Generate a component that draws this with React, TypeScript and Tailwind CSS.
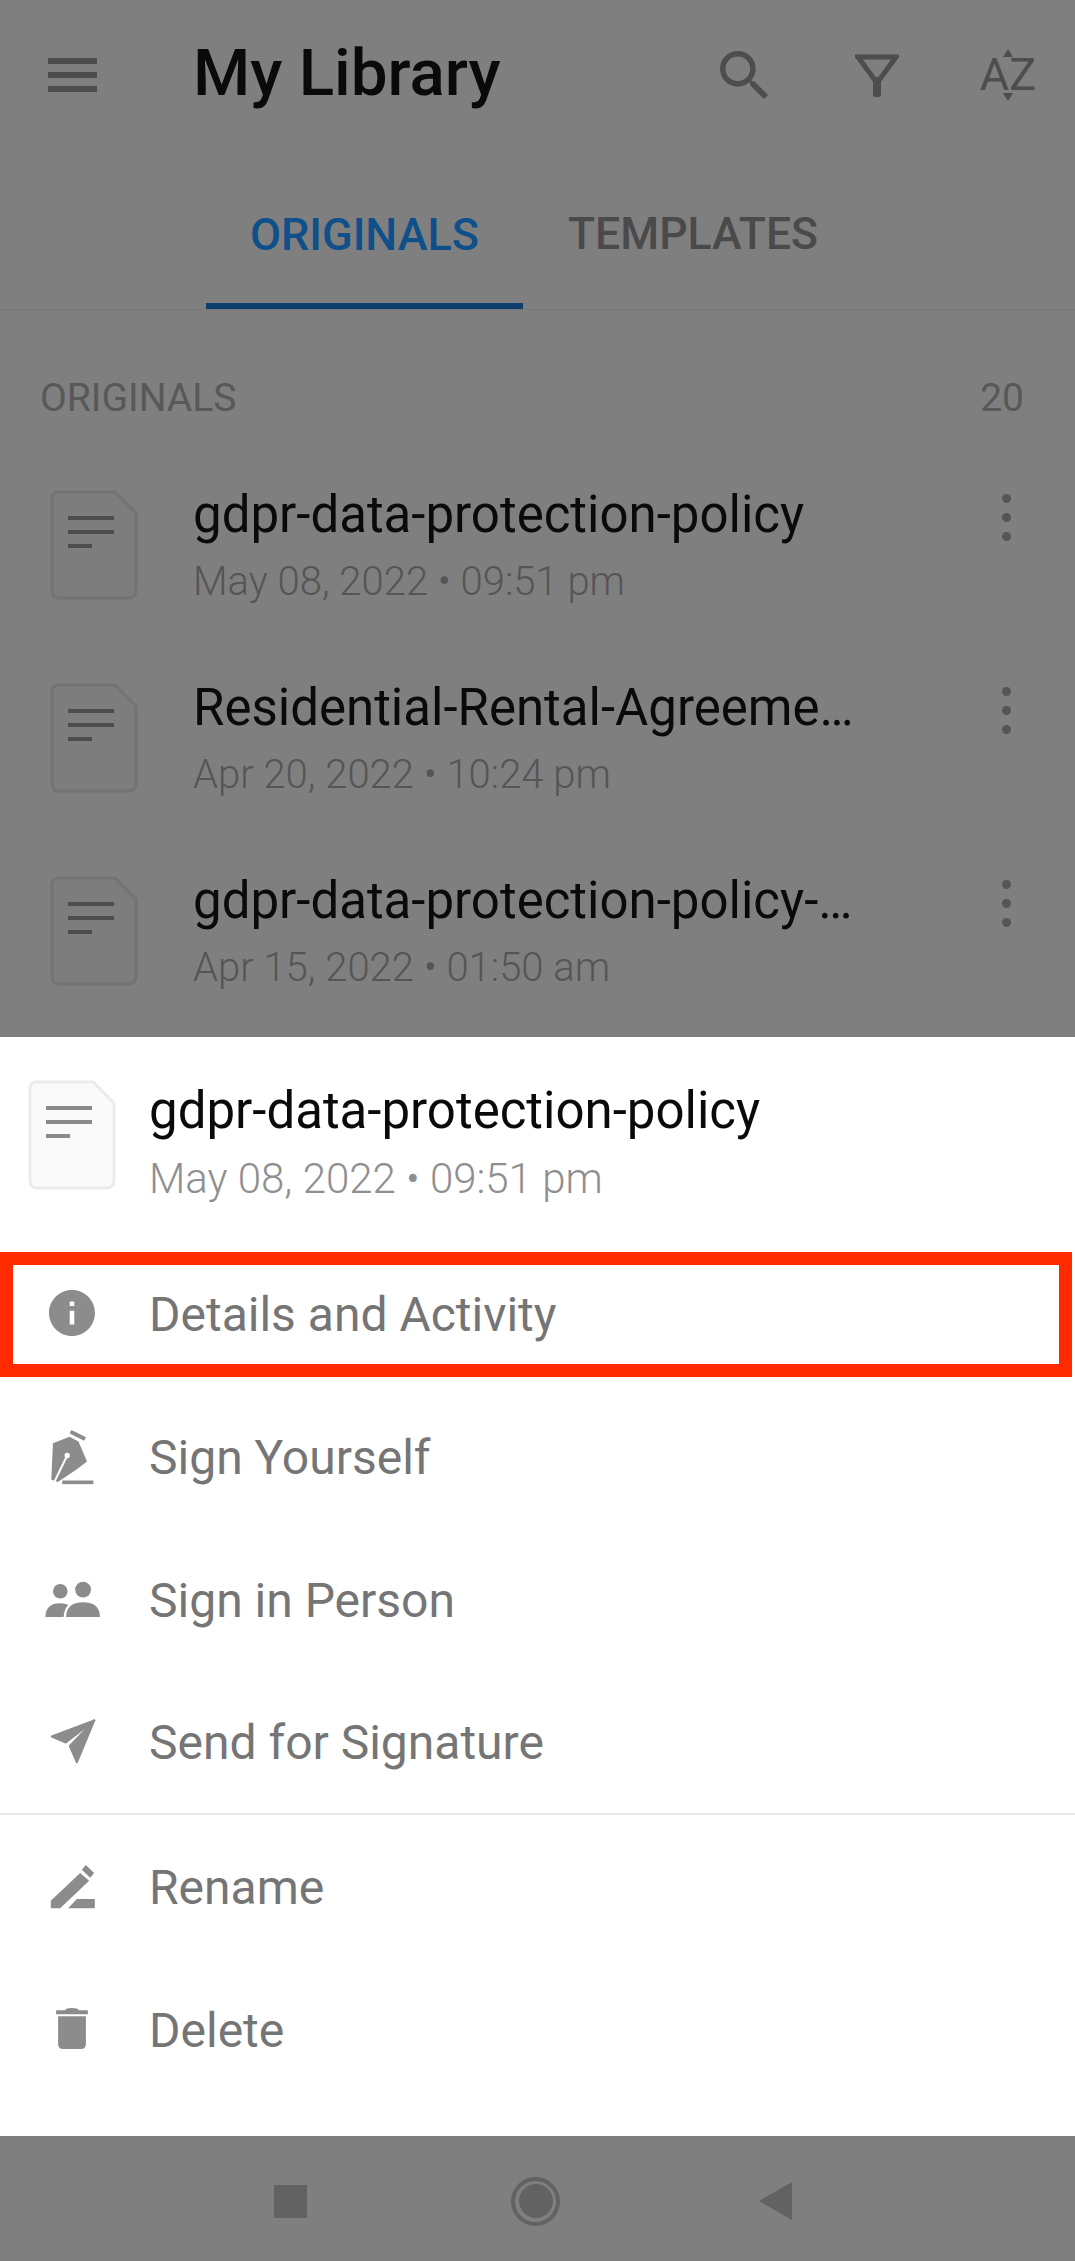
import React from "react";

const files = [
  { name: "gdpr-data-protection-policy", date: "May 08, 2022 • 09:51 pm" },
  { name: "Residential-Rental-Agreeme…", date: "Apr 20, 2022 • 10:24 pm" },
  { name: "gdpr-data-protection-policy-…", date: "Apr 15, 2022 • 01:50 am" },
];

const FileIcon = ({ border, fill, line }: { border: string; fill: string; line: string }) => (
  <svg width="88" height="110" viewBox="0 0 88 110" className="shrink-0">
    <path
      d="M9 2H65L86 23V100Q86 108 78 108H9Q2 108 2 100V9Q2 2 9 2Z"
      fill={fill}
      stroke={border}
      strokeWidth="3"
    />
    <path d="M18 28H64M18 42H64M18 56H42" stroke={line} strokeWidth="4" />
  </svg>
);

const InfoIcon = () => (
  <svg width="46" height="46" viewBox="2 2 20 20" fill="#8c8c8c">
    <path d="M12 2C6.48 2 2 6.48 2 12s4.48 10 10 10 10-4.48 10-10S17.52 2 12 2zm1 15h-2v-6h2v6zm0-8h-2V7h2v2z" />
  </svg>
);

const PenIcon = () => (
  <svg width="48" height="57" viewBox="140 90 145 170" fill="#8c8c8c">
    <path d="M155 135L205 115L232 130L258 190L225 215L170 252L150 245Z" />
    <path d="M208 100L252 122" stroke="#8c8c8c" strokeWidth="12" />
    <path d="M183 253H277" stroke="#8c8c8c" strokeWidth="11" />
    <path d="M198 172L158 254" stroke="#fff" strokeWidth="6" />
    <circle cx="198" cy="172" r="8" fill="#fff" />
  </svg>
);

const PeopleIcon = () => (
  <svg width="57" height="38" viewBox="130 545 170 115" fill="#8c8c8c">
    <circle cx="178" cy="579" r="22" />
    <circle cx="247" cy="574" r="24" />
    <path d="M196 657Q196 612 247 612Q298 612 298 657Z" />
    <path d="M133 657Q133 615 178 615Q190 615 203 620Q190 632 188 657Z" />
  </svg>
);

const SendIcon = () => (
  <svg width="47" height="47" viewBox="145 965 140 140" fill="#8c8c8c" stroke="#8c8c8c" strokeWidth="6" strokeLinejoin="round">
    <path d="M280 972L153 1020L195 1038Z" />
    <path d="M280 972L207 1048L228 1097Z" />
  </svg>
);

const EditIcon = () => (
  <svg width="47" height="45" viewBox="145 255 140 135" fill="#8c8c8c">
    <path d="M150 365L238 282L265 305L178 388H150Z" />
    <path d="M243 272L255 258L280 282L268 296Z" />
    <path d="M202 388L228 360H282V388Z" />
  </svg>
);

const TrashIcon = () => (
  <svg width="34" height="43" viewBox="165 688 102 130" fill="#8c8c8c">
    <path d="M168 698H195Q197 691 215 691Q235 691 237 698H264V710H168Z" />
    <path d="M174 716H258V800Q258 815 243 815H189Q174 815 174 800Z" />
  </svg>
);

const MenuRow = ({ icon, label }: { icon: React.ReactNode; label: string }) => (
  <div className="flex h-[142.7px] items-center">
    <div className="flex w-[144px] shrink-0 justify-center">{icon}</div>
    <span className="ml-[5px] pt-[4px] text-[48px] text-[#757575]">{label}</span>
  </div>
);

export default function App() {
  return (
    <div className="flex h-[2261px] w-[1075px] flex-col overflow-hidden bg-[#7f7f7f] font-['Roboto',sans-serif]">
      {/* app bar */}
      <div className="flex h-[150px] shrink-0 items-center pr-[39px]">
        <div className="ml-[48px] flex w-[49px] flex-col gap-[8px]">
          <div className="h-[6px] bg-[#4d4d4d]" />
          <div className="h-[6px] bg-[#4d4d4d]" />
          <div className="h-[6px] bg-[#4d4d4d]" />
        </div>
        <h1 className="ml-[96px] mb-[4px] text-[65.5px] font-medium text-[#0a0a0a]">My Library</h1>
        <div className="ml-auto flex items-center">
          <svg width="48" height="48" viewBox="3 3 17.5 17.5" fill="#4d4d4d">
            <path d="M15.5 14h-.79l-.28-.27A6.471 6.471 0 0 0 16 9.5 6.5 6.5 0 1 0 9.5 16c1.61 0 3.09-.59 4.23-1.57l.27.28v.79l5 4.99L20.49 19l-4.99-5zm-6 0C7.01 14 5 11.99 5 9.5S7.01 5 9.5 5 14 7.01 14 9.5 11.99 14 9.5 14z" />
          </svg>
          <svg width="44" height="44" viewBox="0 0 44 44" className="ml-[87px]">
            <path d="M3 4H41L22 30Z" fill="none" stroke="#4d4d4d" strokeWidth="5" />
            <rect x="18" y="24" width="8" height="20" rx="2" fill="#4d4d4d" />
          </svg>
          <div className="ml-[81px] flex w-[56px] flex-col items-center text-[#4d4d4d]">
            <div className="h-0 w-0 border-x-[5px] border-b-[8px] border-x-transparent border-b-[#4d4d4d]" />
            <span className="text-[45px] leading-[36px]">AZ</span>
            <div className="h-0 w-0 border-x-[5px] border-t-[8px] border-x-transparent border-t-[#4d4d4d]" />
          </div>
        </div>
      </div>

      {/* tabs */}
      <div className="flex h-[160px] shrink-0 border-b border-[#757575] pl-[206px]">
        <div className="flex w-[317px] items-center justify-center border-b-[6px] border-[#0e3f6c] pt-[16px] text-[45px] font-medium text-[#0f4f8a]">
          ORIGINALS
        </div>
        <div className="flex items-center pl-[45px] pt-[10px] text-[44.5px] font-medium text-[#4a4a4a]">
          TEMPLATES
        </div>
      </div>

      {/* list */}
      <div className="flex h-[727px] shrink-0 flex-col">
        <div className="mt-[44px] flex h-[88px] shrink-0 items-center justify-between pl-[40px] pr-[51px] text-[39px] text-[#585858]">
          <span>ORIGINALS</span>
          <span>20</span>
        </div>
        <div className="mt-[9px] flex flex-col">
          {files.map((f) => (
            <div key={f.date} className="flex h-[193px] items-center">
              <div className="ml-[50px] mb-[6px]">
                <FileIcon border="#737373" fill="#7d7d7d" line="#4d4d4d" />
              </div>
              <div className="ml-[55px] flex flex-1 flex-col pb-[5px]">
                <span className="whitespace-nowrap text-[51px] leading-[64px] text-[#0a0a0a]">{f.name}</span>
                <span className="mt-[10px] text-[40px] leading-[50px] font-light text-[#555555]">{f.date}</span>
              </div>
              <div className="mb-[60px] mr-[64px] flex flex-col gap-[10px]">
                <div className="h-[9px] w-[9px] rounded-full bg-[#555555]" />
                <div className="h-[9px] w-[9px] rounded-full bg-[#555555]" />
                <div className="h-[9px] w-[9px] rounded-full bg-[#555555]" />
              </div>
            </div>
          ))}
        </div>
      </div>

      {/* bottom sheet */}
      <div className="relative flex h-[1099px] shrink-0 flex-col bg-white">
        <div className="flex h-[205px] shrink-0 items-center pt-[3px]">
          <div className="ml-[28px] mb-[12px]">
            <FileIcon border="#ebebeb" fill="#fafafa" line="#8a8a8a" />
          </div>
          <div className="ml-[33px] flex flex-col">
            <span className="text-[51px] leading-[64px] text-[#0a0a0a]">gdpr-data-protection-policy</span>
            <span className="mt-[11px] text-[42px] leading-[50px] font-light text-[#8f8f8f]">May 08, 2022 • 09:51 pm</span>
          </div>
        </div>
        <MenuRow icon={<InfoIcon />} label="Details and Activity" />
        <MenuRow icon={<PenIcon />} label="Sign Yourself" />
        <MenuRow icon={<PeopleIcon />} label="Sign in Person" />
        <MenuRow icon={<SendIcon />} label="Send for Signature" />
        <div className="h-[2px] bg-[#e8e8e8]" />
        <MenuRow icon={<EditIcon />} label="Rename" />
        <MenuRow icon={<TrashIcon />} label="Delete" />

        {/* red annotation box */}
        <div className="absolute left-0 top-[215px] h-[125px] w-[1072px] border-[13px] border-[#ff2a00]" />
      </div>

      {/* nav bar */}
      <div className="flex flex-1 items-center pl-[274px] pt-[5px]">
        <div className="h-[33px] w-[33px] bg-[#626262]" />
        <div className="ml-[204px] flex h-[49px] w-[49px] items-center justify-center rounded-full border-[4px] border-[#626262]">
          <div className="h-[34px] w-[34px] rounded-full bg-[#626262]" />
        </div>
        <svg width="33" height="38" viewBox="0 0 33 38" className="ml-[199px]">
          <path d="M33 0V38L0 19Z" fill="#626262" />
        </svg>
      </div>
    </div>
  );
}
